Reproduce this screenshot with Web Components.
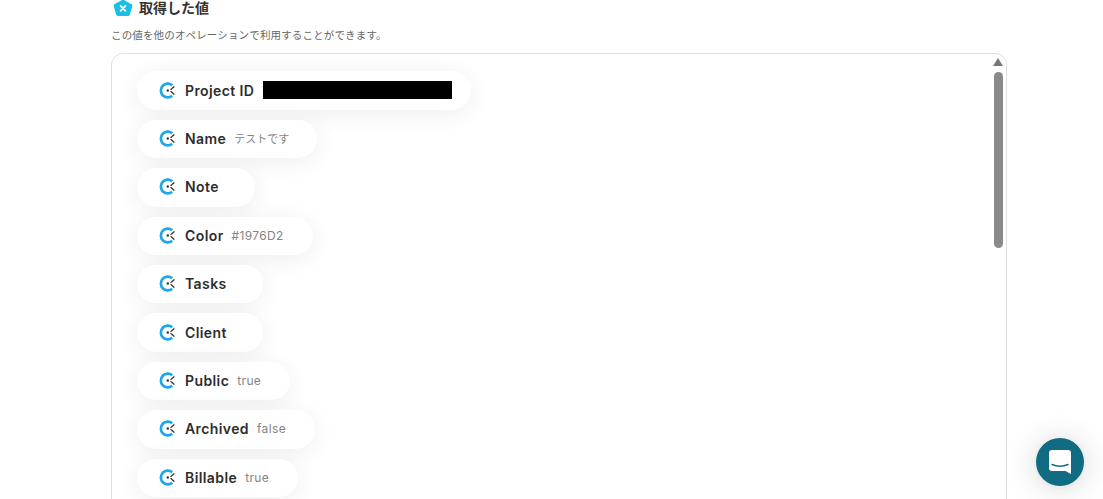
<!DOCTYPE html>
<html lang="ja">
<head>
<meta charset="utf-8">
<title>取得した値</title>
<style>
  html, body { margin: 0; height: 499px; overflow: hidden; background: #fff; }
  body { font-family: Inter, "Noto Sans CJK JP", sans-serif; color: #2b2b2b; }
</style>
</head>
<body>

<output-section>
  <value-chip name="Project ID" masked></value-chip>
  <value-chip name="Name" value="テストです" small></value-chip>
  <value-chip name="Note"></value-chip>
  <value-chip name="Color" value="#1976D2"></value-chip>
  <value-chip name="Tasks"></value-chip>
  <value-chip name="Client"></value-chip>
  <value-chip name="Public" value="true"></value-chip>
  <value-chip name="Archived" value="false"></value-chip>
  <value-chip name="Billable" value="true"></value-chip>
</output-section>
<chat-launcher></chat-launcher>

<script>
class OutputSection extends HTMLElement {
    constructor() {
        super();
        this.attachShadow({ mode: 'open' });
        this.shadowRoot.innerHTML = `
            <style>
                :host {
                    display: block;
                    padding-left: 111px;
                    width: 896px;
                    height: 499px;
                    overflow: hidden;
                }
                header {
                    display: flex;
                    align-items: center;
                    gap: 6px;
                    height: 16px;
                    padding-left: 2px;
                }
                h2 {
                    margin: 0;
                    font-size: 14px;
                    font-weight: 700;
                    line-height: 16px;
                    color: #333;
                }
                p {
                    margin: 12px 0 0;
                    font-size: 10.5px;
                    letter-spacing: 0.15px;
                    line-height: 16px;
                    color: #666;
                }
                #panel {
                    position: relative;
                    box-sizing: border-box;
                    margin-top: 9px;
                    height: 600px;
                    border: 1px solid #e0e0e0;
                    border-radius: 12px;
                    padding: 17.4px 25px;
                    display: flex;
                    flex-direction: column;
                    align-items: flex-start;
                    gap: 10px;
                }
                #arrow {
                    position: absolute;
                    top: 4px;
                    right: 3px;
                    width: 0;
                    height: 0;
                    border-left: 5px solid transparent;
                    border-right: 5px solid transparent;
                    border-bottom: 8px solid #777;
                }
                #thumb {
                    position: absolute;
                    top: 18px;
                    right: 3px;
                    width: 9px;
                    height: 176px;
                    border-radius: 5px;
                    background: #8a8a8a;
                }
            </style>
            <header>
                <svg width="20" height="18" viewBox="0 0 20 18" style="margin-top:-1px">
                    <path d="M10 0.5 L18.6 5.2 Q19.6 5.8 19.3 7 L16.9 15.6 Q16.5 17 15.2 17 H4.8 Q3.5 17 3.1 15.6 L0.7 7 Q0.4 5.8 1.4 5.2 Z" fill="#19bfe6"/>
                    <path d="M7.6 6.8 L12.4 11.8 M12.4 6.8 L7.6 11.8" stroke="#fff" stroke-width="1.8" stroke-linecap="round"/>
                </svg>
                <h2>取得した値</h2>
            </header>
            <p>この値を他のオペレーションで利用することができます。</p>
            <div id="panel">
                <slot></slot>
                <div id="arrow"></div>
                <div id="thumb"></div>
            </div>
        `;
    }
}

class ValueChip extends HTMLElement {
    constructor() {
        super();
        this.attachShadow({ mode: 'open' });
    }

    connectedCallback() {
        const value = this.getAttribute('value');
        let extra = '';
        if (this.hasAttribute('masked')) {
            extra = '<span id="mask"></span>';
        } else {
            // the empty value span still keeps its margin, as in the reference
            extra = `<span id="value">${value || ''}</span>`;
        }
        this.shadowRoot.innerHTML = `
            <style>
                :host {
                    display: flex;
                    width: fit-content;
                }
                #chip {
                    display: flex;
                    align-items: center;
                    box-sizing: border-box;
                    height: 38.4px;
                    padding: 0 29px 1px 22px;
                    background: #fff;
                    border-radius: 20px;
                    box-shadow: 0 4px 24px rgba(0,0,0,0.07);
                }
                svg {
                    flex: none;
                    margin-right: 9px;
                }
                #name {
                    font-size: 14px;
                    font-weight: 600;
                    letter-spacing: 0.4px;
                    color: #2d2d2d;
                }
                #value {
                    margin-left: 8px;
                    font-size: 12px;
                    letter-spacing: 0.35px;
                    color: #858585;
                }
                :host(:not([value])) #value {
                    margin-left: 7px;
                }
                :host([small]) #value {
                    font-size: 11px;
                    letter-spacing: 0;
                    margin-right: -1px;
                }
                #mask {
                    display: block;
                    width: 189px;
                    height: 18px;
                    margin-left: 9px;
                    margin-right: -10px;
                    background: #000;
                }
            </style>
            <div id="chip">
                <svg width="17" height="17" viewBox="0 0 17 17">
                    <path d="M13.2 3.2 A6.9 6.9 0 1 0 13.2 13.8" fill="none" stroke="#1ca7ec" stroke-width="2.7"/>
                    <circle cx="8.8" cy="8.5" r="1.2" fill="#333"/>
                    <path d="M15 4.8 L11.9 7.4 M15 12.2 L11.9 9.6" stroke="#333" stroke-width="1.3" stroke-linecap="round"/>
                </svg>
                <span id="name">${this.getAttribute('name')}</span>
                ${extra}
            </div>
        `;
    }
}

class ChatLauncher extends HTMLElement {
    constructor() {
        super();
        this.attachShadow({ mode: 'open' });
        this.shadowRoot.innerHTML = `
            <style>
                :host {
                    position: fixed;
                    left: 1036px;
                    top: 438px;
                    width: 48px;
                    height: 48px;
                    border-radius: 50%;
                    background: #106b83;
                    box-shadow: 0 1px 6px rgba(0,0,0,0.06), 0 2px 32px rgba(0,0,0,0.16);
                    display: flex;
                    align-items: center;
                    justify-content: center;
                }
            </style>
            <svg width="22" height="24" viewBox="0 0 22 24">
                <path d="M3 0 H19 Q22 0 22 3 V24 L16.5 21 H3 Q0 21 0 18 V3 Q0 0 3 0 Z" fill="#fff"/>
                <path d="M3 14.5 Q11 18 19 14.5" fill="none" stroke="#106b83" stroke-width="1.5" stroke-linecap="round"/>
            </svg>
        `;
    }
}

customElements.define('output-section', OutputSection);
customElements.define('value-chip', ValueChip);
customElements.define('chat-launcher', ChatLauncher);
</script>
</body>
</html>
